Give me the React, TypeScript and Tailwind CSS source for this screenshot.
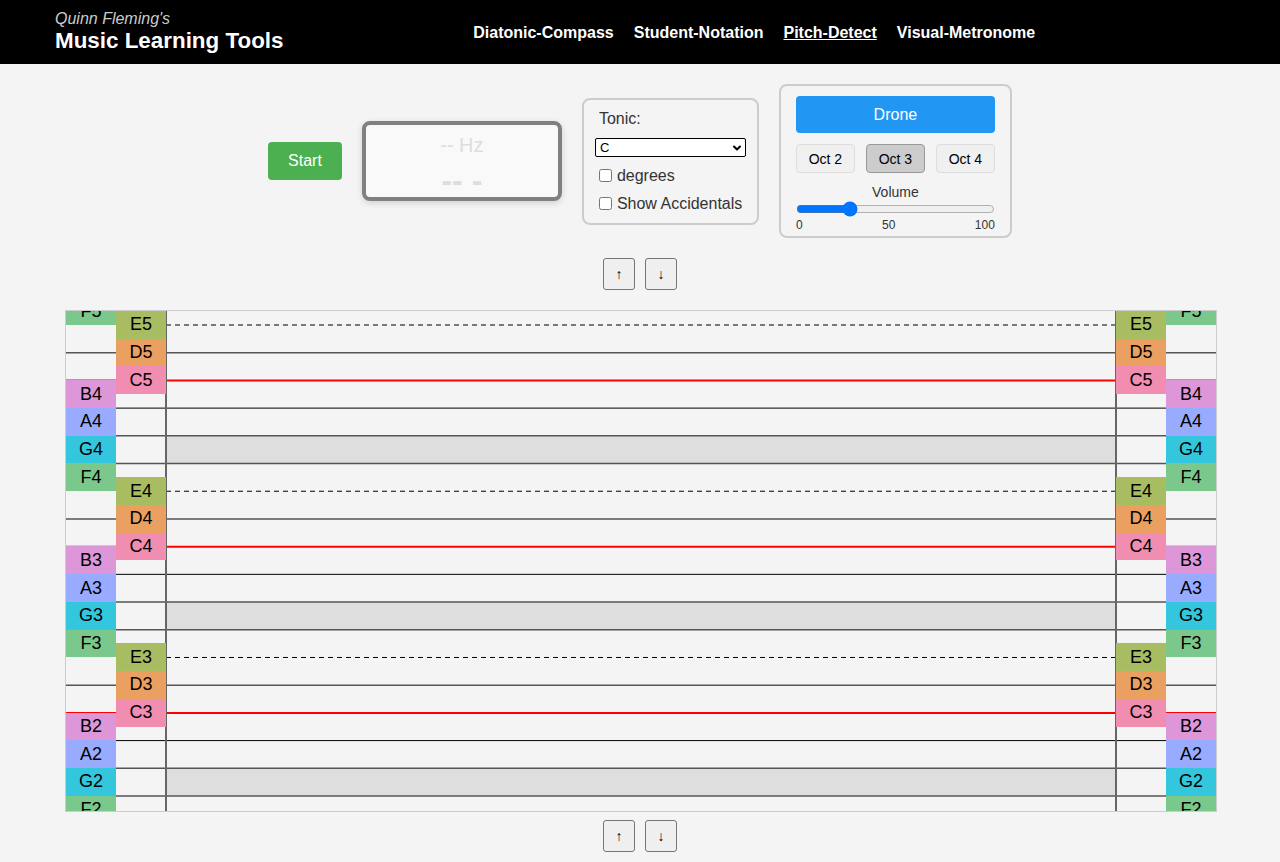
import { ChevronDown } from "lucide-react";

// semitone height on the staff
const H = 13.853;
const STAFF_W = 1150;
const STAFF_H = 500;
const CANVAS_L = 100;
const CANVAS_R = 1050;

const noteBg: Record<string, string> = {
  C: "bg-[#f08db0]",
  D: "bg-[#e9a060]",
  E: "bg-[#a8bd62]",
  F: "bg-[#7ac88c]",
  G: "bg-[#33c6dd]",
  A: "bg-[#98abff]",
  B: "bg-[#dd97d8]",
};

type Cell = { note: string; first?: boolean } | { gap: string };

const outerCol: Cell[] = [
  { note: "F5", first: true },
  { gap: "h-[55.41px]" },
  { note: "B4" },
  { note: "A4" },
  { note: "G4" },
  { note: "F4" },
  { gap: "h-[55.41px]" },
  { note: "B3" },
  { note: "A3" },
  { note: "G3" },
  { note: "F3" },
  { gap: "h-[55.41px]" },
  { note: "B2" },
  { note: "A2" },
  { note: "G2" },
  { note: "F2" },
];

const innerCol: Cell[] = [
  { note: "E5" },
  { note: "D5" },
  { note: "C5" },
  { gap: "h-[83.12px]" },
  { note: "E4" },
  { note: "D4" },
  { note: "C4" },
  { gap: "h-[83.12px]" },
  { note: "E3" },
  { note: "D3" },
  { note: "C3" },
];

function LabelColumn({ cells }: { cells: Cell[] }) {
  return (
    <div className="flex w-[50px] shrink-0 flex-col">
      {cells.map((c, i) =>
        "gap" in c ? (
          <div key={i} className={"shrink-0 " + c.gap} />
        ) : (
          <div
            key={i}
            className={
              "flex h-[27.706px] shrink-0 items-center justify-center text-[18px] text-black " +
              noteBg[c.note[0]] +
              (c.first ? " -mt-[13.853px]" : "")
            }
          >
            {c.note}
          </div>
        )
      )}
    </div>
  );
}

function StaffLines() {
  const y = (s: number) => 0.15 + s * H;
  const octaves = [0, 12, 24];
  return (
    <svg
      width={STAFF_W}
      height={STAFF_H}
      className="col-start-1 row-start-1"
      viewBox={`0 0 ${STAFF_W} ${STAFF_H}`}
    >
      {octaves.map((o) => (
        <g key={o}>
          <rect
            x={CANVAS_L}
            y={y(o + 9)}
            width={CANVAS_R - CANVAS_L}
            height={2 * H}
            fill="#dedede"
          />
          <line
            x1={CANVAS_L}
            x2={CANVAS_R}
            y1={y(o + 1)}
            y2={y(o + 1)}
            stroke="#000"
            strokeWidth={1}
            strokeDasharray="5 4"
          />
          {[3, 7, 9, 11].map((s) => (
            <line
              key={s}
              x1={0}
              x2={STAFF_W}
              y1={y(o + s)}
              y2={y(o + s)}
              stroke={s === 7 ? "#000" : "#555"}
              strokeWidth={s === 7 ? 1 : 1.5}
            />
          ))}
          <line
            x1={0}
            x2={STAFF_W}
            y1={y(o + 5)}
            y2={y(o + 5)}
            stroke="#ff0000"
            strokeWidth={2}
          />
        </g>
      ))}
      <line x1={CANVAS_L} x2={CANVAS_L} y1={0} y2={STAFF_H} stroke="#666" strokeWidth={2} />
      <line x1={CANVAS_R} x2={CANVAS_R} y1={0} y2={STAFF_H} stroke="#666" strokeWidth={2} />
    </svg>
  );
}

function ArrowButtons() {
  return (
    <div className="flex gap-[10px]">
      <button className="h-8 w-8 rounded-[3px] border border-[#767676] bg-[#efefef] text-[14px] text-black">
        ↑
      </button>
      <button className="h-8 w-8 rounded-[3px] border border-[#767676] bg-[#efefef] text-[14px] text-black">
        ↓
      </button>
    </div>
  );
}

export default function App() {
  return (
    <div className="min-h-[862px] bg-[#f4f4f4] font-['Liberation_Sans',Arial,sans-serif] text-[#333]">
      <header className="flex h-16 items-center bg-black px-[55px]">
        <div>
          <div className="text-[16px] italic leading-[18px] text-[#ccc]">Quinn Fleming's</div>
          <div className="text-[22.4px] font-bold leading-[26px] text-white">Music Learning Tools</div>
        </div>
        <nav className="flex flex-1 justify-center gap-5 pt-[1px] text-[16px] font-bold text-white">
          <a>Diatonic-Compass</a>
          <a>Student-Notation</a>
          <a className="underline">Pitch-Detect</a>
          <a>Visual-Metronome</a>
        </nav>
      </header>

      <main className="flex flex-col items-center pt-5">
        <div className="flex items-center gap-5">
          <button className="h-[38px] rounded-[4px] bg-[#4caf50] px-5 text-[16px] text-white">
            Start
          </button>

          <div className="flex h-[80px] w-[200px] flex-col items-center rounded-[8px] border-4 border-[#808080] bg-[#f9f9f9] pt-2 shadow-[0_2px_6px_rgba(0,0,0,0.15)]">
            <div className="text-[20px] leading-[24px] text-[#ddd]">-- Hz</div>
            <div className="mt-[5px] text-[32px] font-bold leading-[36px] text-[#ddd]">-- -</div>
          </div>

          <div className="flex w-[177px] flex-col rounded-[8px] border-2 border-[#ccc] px-[11px] pb-[9px] pt-[9px] text-[16px]">
            <div className="ml-[4px] leading-[20px]">Tonic:</div>
            <div className="relative mt-[9px] h-[19px] w-[151px]">
              <select className="block h-[19px] w-full appearance-none rounded-[2px] border border-black bg-white pl-[4px] text-[13px] leading-[17px] text-black">
                <option>C</option>
              </select>
              <ChevronDown
                className="pointer-events-none absolute right-[3px] top-[4px] h-[12px] w-[12px] text-black"
                strokeWidth={4}
              />
            </div>
            <label className="mt-[9px] ml-[4px] flex h-5 items-center gap-[5px]">
              <input type="checkbox" className="m-0 h-[13px] w-[13px]" />
              degrees
            </label>
            <label className="mt-2 ml-[4px] flex h-5 items-center gap-[5px]">
              <input type="checkbox" className="m-0 h-[13px] w-[13px]" />
              Show Accidentals
            </label>
          </div>

          <div className="flex w-[233px] flex-col rounded-[8px] border-2 border-[#ccc] px-[15px] pb-[4px] pt-[10px]">
            <button className="h-[37px] w-full rounded-[4px] bg-[#2196f3] text-[16px] text-white">
              Drone
            </button>
            <div className="mt-[11px] flex justify-between">
              <button className="h-[29px] w-[59px] rounded-[4px] border border-[#ddd] bg-[#f0f0f0] pt-[1px] text-[14px] text-black">
                Oct 2
              </button>
              <button className="h-[29px] w-[59px] rounded-[4px] border border-[#999] bg-[#ccc] pt-[1px] text-[14px] text-black">
                Oct 3
              </button>
              <button className="h-[29px] w-[59px] rounded-[4px] border border-[#ddd] bg-[#f0f0f0] pt-[1px] text-[14px] text-black">
                Oct 4
              </button>
            </div>
            <div className="mt-[11px] text-center text-[14px] leading-[16px]">Volume</div>
            <input
              type="range"
              min={0}
              max={100}
              defaultValue={25}
              className="m-0 mt-[1px] block h-[16px] w-full"
            />
            <div className="mt-[1px] flex justify-between text-[12px] leading-[14px]">
              <span>0</span>
              <span>50</span>
              <span>100</span>
            </div>
          </div>
        </div>

        <div className="mt-5">
          <ArrowButtons />
        </div>

        <div className="mt-5 grid h-[502px] w-[1152px] translate-x-[1px] overflow-hidden border border-[#ccc] bg-[#f4f4f4]">
          <StaffLines />
          <div className="col-start-1 row-start-1 flex h-[500px]">
            <LabelColumn cells={outerCol} />
            <LabelColumn cells={innerCol} />
            <div className="w-[950px] shrink-0" />
            <LabelColumn cells={innerCol} />
            <LabelColumn cells={outerCol} />
          </div>
        </div>

        <div className="mt-2">
          <ArrowButtons />
        </div>
      </main>
    </div>
  );
}
